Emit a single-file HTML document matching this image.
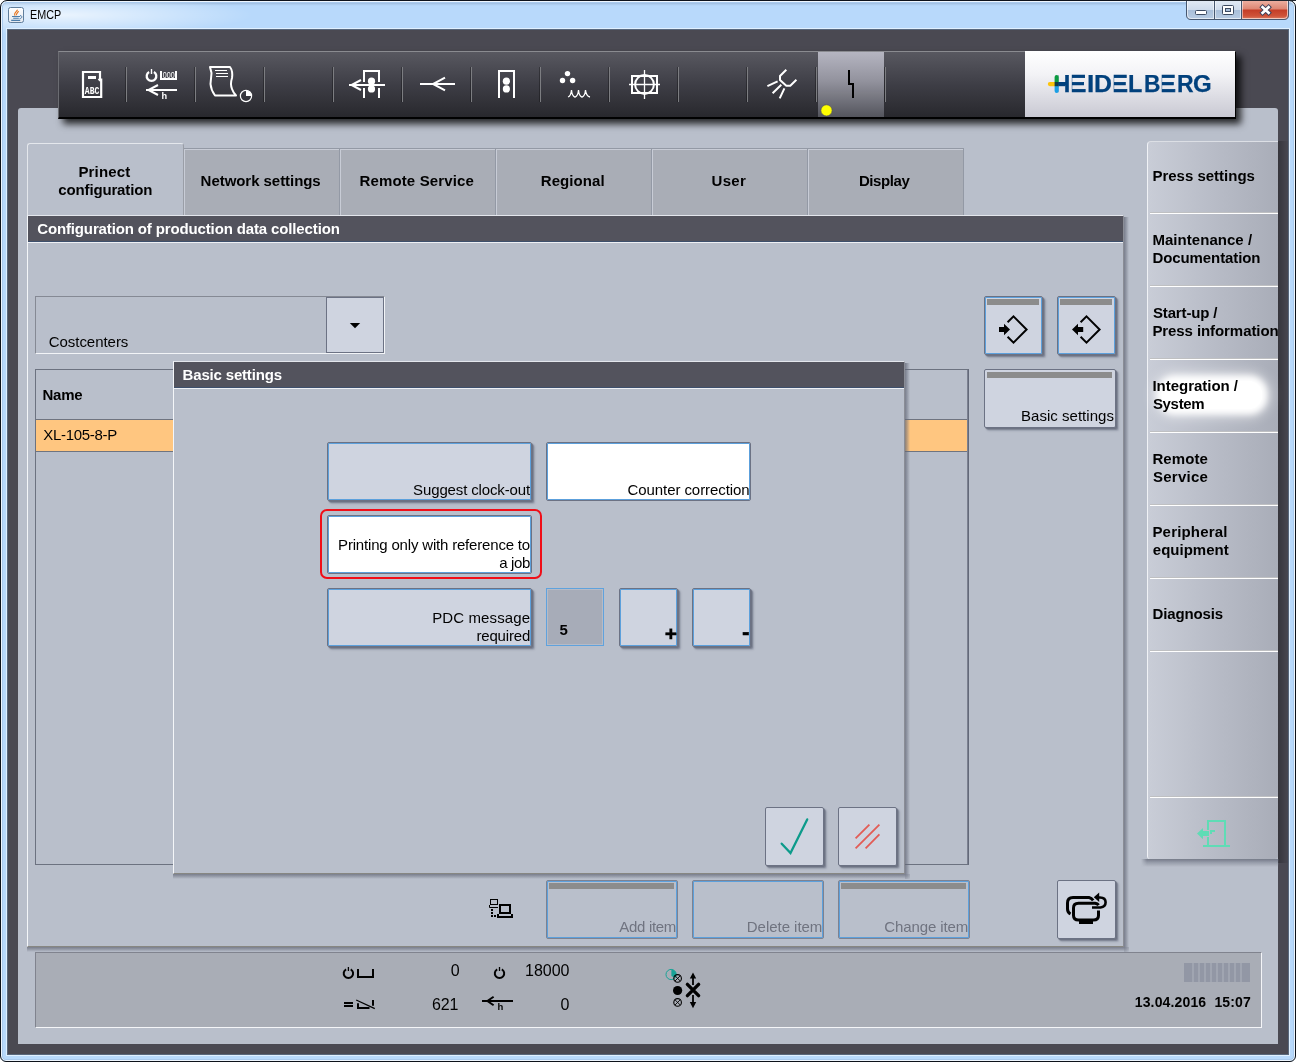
<!DOCTYPE html>
<html><head><meta charset="utf-8"><title>EMCP</title>
<style>
*{box-sizing:border-box;margin:0;padding:0}
html,body{width:1296px;height:1062px;overflow:hidden;background:#fff}
body{font-family:"Liberation Sans",Arial,sans-serif;font-size:14px;color:#000;position:relative}
#root{position:absolute;left:0;top:0;width:1296px;height:1062px;opacity:.999;transform:rotate(0.0001deg)}
.abs{position:absolute}
svg{position:absolute;overflow:visible}
#frame{position:absolute;left:0;top:0;width:1296px;height:1062px;background:radial-gradient(ellipse 190px 20px at 62px 14px,rgba(255,255,255,.7),rgba(255,255,255,.35) 50%,rgba(255,255,255,0)),linear-gradient(180deg,#9fbddd 0,#9fbddd 2px,#a9c8ea 3px,#b2d2f4 4px,#b8d9fb 5px,#b8d9fb 100%);border:1px solid #0c1119;border-radius:7px 7px 6px 6px;box-shadow:inset 0 0 0 1px #eef6fe,inset 0 0 0 2px #a9caee}
#dark{position:absolute;left:7px;top:29px;width:1282px;height:1026px;background:#494851;border:1px solid #58677b;box-shadow:0 0 0 1px #e0f0ff}
#main{position:absolute;left:18px;top:108px;width:1260px;height:936px;background:#b9bfcb;border-radius:3px 3px 0 0}
#toolbar{position:absolute;left:58px;top:51px;width:1178px;height:68px;background:linear-gradient(180deg,#57575f 0,#3d3d45 50%,#27272c 100%);border-top:1px solid #8a8b90;border-left:1px solid #6a6b71;border-right:1px solid #000;border-bottom:2px solid #000;box-shadow:5px 5px 7px rgba(0,0,0,.8)}
.sep{position:absolute;top:15px;width:1px;height:35px;background:#7b7c81;box-shadow:-1px 0 0 rgba(0,0,0,.3)}
#logo{position:absolute;left:1025px;top:51px;width:210px;height:66px;background:linear-gradient(180deg,#fff 0,#f3f3f6 35%,#dcdce3 70%,#c9c9d3 100%)}
#active{position:absolute;left:818px;top:52px;width:66px;height:65px;background:linear-gradient(180deg,#b5b5c1 0,#92929d 45%,#53545c 100%)}
.tab{position:absolute;top:148px;width:156px;height:67px;background:#a9adb6;border-top:1px solid #9399a5;border-right:1px solid #9399a5;box-shadow:inset 1px 1px 0 #c8ccd6}
.tab span{position:absolute;left:0;right:0}
.hdr{background:#52525c;color:#fff;font-weight:bold;font-size:14px;letter-spacing:.33px;white-space:nowrap}
.btn{position:absolute;background:#cfd4e0;border:1px solid #6b7184;border-radius:2px}
.btn .bar{position:absolute;left:2px;right:3px;top:2px;height:6px;background:#8c8c8c}
.lbl{position:absolute;right:1px;bottom:0;font-size:14px;line-height:18px;text-align:right;white-space:nowrap;letter-spacing:.2px}
.side{position:absolute;left:5px;font-weight:bold;font-size:14px;line-height:18px;letter-spacing:.35px;white-space:nowrap}
.sline{position:absolute;left:2px;right:0;height:2px;background:linear-gradient(180deg,#bfc0c2 0,#bfc0c2 50%,#fff 50%,#fff 100%)}
.dis{background:#b9bfcb;box-shadow:none}
.dis .lbl{color:#7f838d}
.st{font-size:16px;line-height:20px;white-space:nowrap;position:absolute;text-align:right}
.gb{border-color:#8d919b}
</style></head><body>
<div id="root"><div id="frame"></div>
<svg style="left:0px;top:0px" width="40" height="30" viewBox="0 0 40 30" ><defs><linearGradient id="jg" x1="0" y1="0" x2="0" y2="1"><stop offset="0" stop-color="#fff"/><stop offset="1" stop-color="#e4e9f0"/></linearGradient></defs><rect x="8.5" y="7.5" width="15" height="15" rx="2" fill="url(#jg)" stroke="#5f7d9c"/><path d="M15.2,15.6 C13.2,13.6 16.2,11.8 17.6,9.8 M16.6,15.2 C15.6,13.6 18.6,12.6 18.4,11" stroke="#e8741c" stroke-width="1.1" fill="none"/><path d="M12,16.5 H20 M13.2,18.3 H18.8 M11.2,20.4 H20.2" stroke="#4c7dab" stroke-width="1.1" fill="none"/><path d="M20,15.6 C22.6,15.4 22.4,18.6 19.6,18.6" stroke="#4c7dab" stroke-width="1" fill="none"/></svg>
<div class="abs" style="left:30px;top:7px;font-size:12px;line-height:16px;color:#000;transform:scaleX(.9);transform-origin:0 0;white-space:nowrap">EMCP</div>
<svg style="left:1176px;top:0px" width="120" height="24" viewBox="1176 0 120 24" ><defs>
<linearGradient id="cb1" x1="0" y1="0" x2="0" y2="1"><stop offset="0" stop-color="#e3ebf5"/><stop offset=".48" stop-color="#cfdcec"/><stop offset=".5" stop-color="#a9bfd9"/><stop offset="1" stop-color="#b9cde4"/></linearGradient>
<linearGradient id="cb2" x1="0" y1="0" x2="0" y2="1"><stop offset="0" stop-color="#eeb3a5"/><stop offset=".45" stop-color="#dd8672"/><stop offset=".5" stop-color="#c43c26"/><stop offset=".8" stop-color="#cf5238"/><stop offset="1" stop-color="#e08a70"/></linearGradient>
<clipPath id="cbc"><path d="M1186.5,0 H1288.5 V15 Q1288.5,19.5 1284,19.5 H1191 Q1186.5,19.5 1186.5,15 Z"/></clipPath>
</defs><g clip-path="url(#cbc)"><rect x="1186" y="0" width="55" height="20" fill="url(#cb1)"/><rect x="1241" y="0" width="48" height="20" fill="url(#cb2)"/></g><path d="M1186.5,0 V15 Q1186.5,19.5 1191,19.5 H1284 Q1288.5,19.5 1288.5,15 V0" fill="none" stroke="#45566e" stroke-width="1"/><path d="M1187.5,1 V15 Q1187.5,18.5 1191,18.5 H1284 Q1287.5,18.5 1287.5,15 V1" fill="none" stroke="rgba(255,255,255,.6)" stroke-width="1"/><path d="M1214.5,1 V19 M1241.5,1 V19" stroke="#45566e" stroke-width="1"/><path d="M1213.5,1 V18 M1215.5,1 V18 M1240.5,1 V18 M1242.5,1 V18" stroke="rgba(255,255,255,.5)" stroke-width="1"/><rect x="1195.5" y="10.5" width="11" height="4" rx="1" fill="#fff" stroke="#3c4a60" stroke-width="1"/><rect x="1222.5" y="5.5" width="11" height="9" rx="1" fill="#fff" stroke="#3c4a60" stroke-width="1"/><rect x="1225.5" y="8.5" width="5" height="3" fill="#a9bfd9" stroke="#3c4a60" stroke-width="1"/><path d="M1262.6,7.2 L1268.6,12.8 M1268.6,7.2 L1262.6,12.8" stroke="#3a3f58" stroke-width="4.6" stroke-linecap="square"/><path d="M1262.6,7.2 L1268.6,12.8 M1268.6,7.2 L1262.6,12.8" stroke="#fff" stroke-width="2.7" stroke-linecap="square"/><rect x="1180" y="0" width="116" height="1" fill="#20262e"/></svg>
<div id="dark"></div>
<div id="main"></div>
<div id="toolbar"><div class="sep" style="left:67px"></div><div class="sep" style="left:136px"></div><div class="sep" style="left:205px"></div><div class="sep" style="left:274px"></div><div class="sep" style="left:343px"></div><div class="sep" style="left:412px"></div><div class="sep" style="left:481px"></div><div class="sep" style="left:550px"></div><div class="sep" style="left:619px"></div><div class="sep" style="left:688px"></div><div class="sep" style="left:757px"></div><div class="sep" style="left:826px"></div></div><div id="active"></div><div id="logo"></div>
<svg style="left:0;top:0;opacity:.999" width="1296" height="130" viewBox="0 0 1296 130" fill="none" stroke="#fff" stroke-width="2">
<path d="M83,72 H100 V79.5 H101.2 V97 H83 Z" stroke-width="2.2"/>
<path d="M98.3,79 L100.6,81.3" stroke-width="1.5"/>
<rect x="88" y="76" width="8" height="3" fill="#fff" stroke="none"/>
<text x="84.8" y="94.2" font-family="Liberation Mono,monospace" font-weight="bold" font-size="8.2" fill="#fff" stroke="none" transform="translate(0,94.2) scale(1,1.34) translate(0,-94.2)" textLength="14.6" lengthAdjust="spacingAndGlyphs">ABC</text>
<path d="M149.1,71.9 A4.8,4.8 0 1 0 153.9,71.9" stroke-width="2.3"/>
<path d="M151.5,69 V74" stroke-width="1.4"/>
<path d="M161,71 V79 H176 V71" stroke-width="2"/>
<text x="162.8" y="77.6" font-family="Liberation Sans,sans-serif" font-size="7.6" fill="#fff" stroke="none" transform="translate(0,77.6) scale(1,1.22) translate(0,-77.6)" textLength="11.8" lengthAdjust="spacingAndGlyphs">000</text>
<path d="M146,90 H177"/>
<path d="M158,85 L148.5,90 L158,95" stroke-width="2"/>
<text x="161.5" y="99" font-family="Liberation Sans,sans-serif" font-weight="bold" font-size="9.2" fill="#fff" stroke="none">h</text>
<path d="M210,67 H230 Q233,71 232,78 Q230,84 232,89 Q233,92 236,95.5 H215 Q211,90 210.5,84 Q211,79 211.5,73 Z" stroke-width="2" stroke-linejoin="round"/>
<path d="M215,70.5 H227 M216,73.5 H228 M216,76.5 H228" stroke-width="1.2"/>
<circle cx="246" cy="96" r="5.6" stroke-width="1.2"/>
<path d="M246,96 V90.4 A5.6,5.6 0 0 1 251.6,96 Z" fill="#fff" stroke="none"/>
<path d="M364,82 V71 H379 V82 M364,88 V98 M379,88 V98" stroke-width="2"/>
<path d="M349,85 H385"/>
<path d="M361,80 L351.5,85 L361,90"/>
<circle cx="371.5" cy="81.2" r="3.6" fill="#fff" stroke="none"/><circle cx="371.5" cy="88.9" r="3.6" fill="#fff" stroke="none"/>
<path d="M420,84 H455"/>
<path d="M445,77.6 L433,84 L445,90.4"/>
<path d="M499,98 V71 H514 V98"/>
<circle cx="506.4" cy="81.2" r="3.6" fill="#fff" stroke="none"/><circle cx="506.4" cy="88.9" r="3.6" fill="#fff" stroke="none"/>
<circle cx="567.5" cy="73.6" r="2.7" fill="#fff" stroke="none"/><circle cx="562.5" cy="80.5" r="2.7" fill="#fff" stroke="none"/><circle cx="572.6" cy="80.5" r="2.7" fill="#fff" stroke="none"/>
<path d="M568,97 Q571,96 571.5,90 Q572,96 575,97.2 Q578,96 578.5,90 Q579,96 582,97.2 Q585,96 585.5,90 Q586,96 590,97" stroke-width="1.3"/>
<rect x="632" y="76" width="25" height="17" stroke-width="2"/>
<circle cx="644.5" cy="84.5" r="9.4" stroke-width="2"/>
<path d="M644.5,70 V99 M629,84.5 H660" stroke-width="1.3"/>
<path d="M786.3,69.7 L780,76 V80 L786.3,85.8 H790.3 L796.4,79.8" stroke-width="2"/>
<path d="M777.6,81.4 L767.4,86.1 M781.3,84.7 L772.6,93.2 M784.4,88.3 L779.7,98.4" stroke-width="2"/>
<path d="M849,70 V84 H853 V98" stroke="#000" stroke-width="2" stroke-linejoin="miter"/>
<circle cx="826.5" cy="110.4" r="5.6" fill="#ffff00" stroke="#4a4a5a" stroke-width=".6"/>
</svg>
<div class="abs" style="left:0;top:69.47px;width:1296px;height:30px;font-weight:bold;font-size:23.75px;line-height:30px;color:#00407c;white-space:nowrap"><span style="position:absolute;left:1053.04px;top:0;transform-origin:0 0;transform:scaleX(1.013);clip-path:inset(0 0 0 4.99px);-webkit-text-stroke:.25px #00407c">H</span><span style="position:absolute;left:1065.30px;top:0;transform-origin:0 0;transform:scaleX(1.350);clip-path:inset(0 0 0 5.04px);-webkit-text-stroke:.7px #00407c">E</span><span style="position:absolute;left:1087.30px;top:0;transform-origin:0 0;transform:scaleX(1.103);-webkit-text-stroke:.25px #00407c">I</span><span style="position:absolute;left:1094.28px;top:0;transform-origin:0 0;transform:scaleX(1.047);-webkit-text-stroke:.25px #00407c">D</span><span style="position:absolute;left:1107.31px;top:0;transform-origin:0 0;transform:scaleX(1.330);clip-path:inset(0 0 0 5.04px);-webkit-text-stroke:.7px #00407c">E</span><span style="position:absolute;left:1128.37px;top:0;transform-origin:0 0;transform:scaleX(0.989);-webkit-text-stroke:.25px #00407c">L</span><span style="position:absolute;left:1143.62px;top:0;transform-origin:0 0;transform:scaleX(0.959);-webkit-text-stroke:.25px #00407c">B</span><span style="position:absolute;left:1155.11px;top:0;transform-origin:0 0;transform:scaleX(1.330);clip-path:inset(0 0 0 5.04px);-webkit-text-stroke:.7px #00407c">E</span><span style="position:absolute;left:1176.61px;top:0;transform-origin:0 0;transform:scaleX(0.968);-webkit-text-stroke:.25px #00407c">R</span><span style="position:absolute;left:1192.84px;top:0;transform-origin:0 0;transform:scaleX(1.011);-webkit-text-stroke:.25px #00407c">G</span></div>
<svg style="left:1020px;top:50px" width="220" height="70" viewBox="1020 50 220 70" ><rect x="1054.6" y="75" width="4.1" height="9" rx="2" fill="#0a9b3f"/><rect x="1054.6" y="84" width="4.1" height="9" rx="2" fill="#1aa0e6"/><rect x="1047.8" y="82" width="9" height="4.2" rx="2.1" fill="#fdc40a"/><rect x="1054.6" y="82" width="4.1" height="4.2" fill="#0f3b46"/><rect x="1058.5" y="82" width="7" height="4.2" fill="#00407c"/></svg>
<div class="abs" style="left:27px;top:143px;width:157px;height:73px;background:#b9bfcb;border:1px solid #e4e7ec;border-right-color:#9a9ea7;border-bottom:none;border-radius:3px 3px 0 0"></div>
<div class="abs" style="left:78.43px;top:162.80px;font-size:15px;line-height:18px;white-space:pre;color:#000;letter-spacing:0.158px;font-weight:bold;">Prinect</div>
<div class="abs" style="left:58.30px;top:180.80px;font-size:15px;line-height:18px;white-space:pre;color:#000;letter-spacing:-0.146px;font-weight:bold;">configuration</div>
<div class="tab" style="left:184px"></div>
<div class="abs" style="left:200.62px;top:171.80px;font-size:15px;line-height:18px;white-space:pre;color:#000;letter-spacing:-0.050px;font-weight:bold;">Network settings</div>
<div class="tab" style="left:340px"></div>
<div class="abs" style="left:359.52px;top:171.80px;font-size:15px;line-height:18px;white-space:pre;color:#000;letter-spacing:0.133px;font-weight:bold;">Remote Service</div>
<div class="tab" style="left:496px"></div>
<div class="abs" style="left:540.73px;top:171.80px;font-size:15px;line-height:18px;white-space:pre;color:#000;letter-spacing:0.093px;font-weight:bold;">Regional</div>
<div class="tab" style="left:652px"></div>
<div class="abs" style="left:711.60px;top:171.80px;font-size:15px;line-height:18px;white-space:pre;color:#000;letter-spacing:0.283px;font-weight:bold;">User</div>
<div class="tab" style="left:808px"></div>
<div class="abs" style="left:858.92px;top:171.80px;font-size:15px;line-height:18px;white-space:pre;color:#000;letter-spacing:-0.396px;font-weight:bold;">Display</div>
<div class="abs" style="left:27px;top:947px;width:1097px;height:5px;background:linear-gradient(180deg,rgba(96,101,116,.72),rgba(96,101,116,.45) 40%,rgba(96,101,116,0))"></div>
<div class="abs" style="left:1124px;top:217px;width:5px;height:730px;background:linear-gradient(90deg,rgba(96,101,116,.72),rgba(96,101,116,.45) 40%,rgba(96,101,116,0))"></div>
<div class="abs" style="left:1124px;top:947px;width:5px;height:5px;background:radial-gradient(circle at 0 0,rgba(96,101,116,.72),rgba(96,101,116,.45) 40%,rgba(96,101,116,0) 100%)"></div>
<div class="abs" id="panel" style="left:27px;top:215px;width:1097px;height:732px;border-left:1px solid #f4f6f9;border-top:1px solid #e3e6ec;border-bottom:1px solid #878782;border-right:1px solid #8a8d96"></div>
<div class="abs hdr" style="left:28px;top:216px;width:1095px;height:25px"></div>
<div class="abs" style="left:37.20px;top:219.80px;font-size:15px;line-height:18px;white-space:pre;color:#fff;letter-spacing:-0.134px;font-weight:bold;">Configuration of production data collection</div>
<div class="abs" style="left:28px;top:241px;width:1095px;height:1px;background:#3d4f6c"></div>
<div class="abs" style="left:28px;top:242px;width:1095px;height:1px;background:#eef0f4"></div>
<div class="abs" style="left:35px;top:296px;width:350px;height:58px;border:1px solid #858994;border-bottom-color:#f2f4f7;border-right-color:#f2f4f7"></div>
<div class="abs" style="left:48.75px;top:332.80px;font-size:15px;line-height:18px;white-space:pre;color:#000;letter-spacing:-0.045px;">Costcenters</div>
<div class="abs" style="left:326px;top:297px;width:58px;height:56px;background:#cfd4e0;border:1px solid #6b7184"></div>
<svg style="left:349px;top:322px" width="12" height="7"><path d="M0.8,1 H11.2 L6,6.3 Z" fill="#000"/></svg>
<div class="abs" style="left:35px;top:369px;width:934px;height:496px;border:1px solid #6b7180;border-right-color:#626878;box-shadow:inset -1px 0 0 #7b8191"></div>
<div class="abs" style="left:42.52px;top:385.80px;font-size:15px;line-height:18px;white-space:pre;color:#000;letter-spacing:-0.258px;font-weight:bold;">Name</div>
<div class="abs" style="left:36px;top:419px;width:931px;height:33px;background:#ffc680;border-top:1px solid #6e7380;border-bottom:1px solid #6e7380"></div>
<div class="abs" style="left:43.23px;top:425.80px;font-size:15px;line-height:18px;white-space:pre;color:#000;letter-spacing:-0.303px;">XL-105-8-P</div>
<div class="btn" style="left:984px;top:296px;width:59px;height:59px;background:#cfd4e0;box-shadow:inset 0 0 0 1px #5ba0dc,1px 1px 0 rgba(95,101,120,.6),2px 2px 1px rgba(95,101,120,.5),3px 3px 2px rgba(95,101,120,.3);"><div class="bar" style="background:#8c8c8c"></div></div>
<div class="btn" style="left:1057px;top:296px;width:59px;height:59px;background:#cfd4e0;box-shadow:inset 0 0 0 1px #5ba0dc,1px 1px 0 rgba(95,101,120,.6),2px 2px 1px rgba(95,101,120,.5),3px 3px 2px rgba(95,101,120,.3);"><div class="bar" style="background:#8c8c8c"></div></div>
<div class="btn" style="left:984px;top:369px;width:132px;height:59px;background:#cfd4e0;box-shadow:1px 1px 0 rgba(95,101,120,.6),2px 2px 1px rgba(95,101,120,.5),3px 3px 2px rgba(95,101,120,.3);"><div class="bar" style="background:#8c8c8c"></div></div>
<div class="abs" style="left:1021.00px;top:406.80px;font-size:15px;line-height:18px;white-space:pre;color:#000;letter-spacing:0.029px;">Basic settings</div>
<svg style="left:980px;top:296px" width="140" height="60" viewBox="980 296 140 60" ><path d="M1007.6,322.2 L1013.5,316.3 L1026.6,329.5 L1013.5,342.7 L1007.6,336.8" fill="none" stroke="#000" stroke-width="2" stroke-linejoin="miter"/><path d="M1080.6,322.2 L1086.5,316.3 L1099.6,329.5 L1086.5,342.7 L1080.6,336.8" fill="none" stroke="#000" stroke-width="2" stroke-linejoin="miter"/><path d="M999,327.1 H1004 V323.8 L1010,329.5 L1004,335.3 V331.9 H999 Z" fill="#000"/><path d="M1083.2,327.1 H1078 V323.8 L1072,329.5 L1078,335.3 V331.9 H1083.2 Z" fill="#000"/></svg>
<div class="btn" style="left:546px;top:880px;width:132px;height:59px;background:#b9bfcb;box-shadow:inset 0 0 0 1px #5ba0dc;border-color:#7d8291;"><div class="bar" style="background:#8c8c8c"></div></div>
<div class="btn" style="left:692px;top:880px;width:132px;height:59px;background:#b9bfcb;box-shadow:inset 0 0 0 1px #5ba0dc;border-color:#7d8291;"></div>
<div class="btn" style="left:838px;top:880px;width:132px;height:59px;background:#b9bfcb;box-shadow:inset 0 0 0 1px #5ba0dc;border-color:#7d8291;"><div class="bar" style="background:#8c8c8c"></div></div>
<div class="abs" style="left:619.30px;top:917.80px;font-size:15px;line-height:18px;white-space:pre;color:#6f7380;letter-spacing:-0.311px;">Add item</div>
<div class="abs" style="left:746.80px;top:917.80px;font-size:15px;line-height:18px;white-space:pre;color:#6f7380;letter-spacing:-0.033px;">Delete item</div>
<div class="abs" style="left:884.25px;top:917.80px;font-size:15px;line-height:18px;white-space:pre;color:#6f7380;letter-spacing:-0.093px;">Change item</div>
<div class="btn" style="left:1057px;top:880px;width:59px;height:59px;background:#cfd4e0;box-shadow:1px 1px 0 rgba(95,101,120,.6),2px 2px 1px rgba(95,101,120,.5),3px 3px 2px rgba(95,101,120,.3);"></div>
<svg style="left:1057px;top:880px" width="60" height="60" viewBox="1057 880 60 60" ><g fill="none" stroke="#000" stroke-width="3"><path d="M1070.5,914 Q1067.5,912.5 1067.5,909 V903 Q1067.5,897.5 1073,897.5 H1089 Q1091.5,898 1093.2,900.3"/><path d="M1098.5,910.5 V915.5 Q1098.5,920 1093.5,920 H1078.5 Q1073.5,920 1073.5,915.5 V908 Q1073.5,903.3 1078.5,903.3 H1095 Q1097.5,903.6 1098.6,905.2"/><path d="M1092,907.5 H1100.5 Q1105.6,906.8 1105.6,902.3 Q1105.6,897.6 1100,897.5 H1098" stroke-width="2.6"/></g><path d="M1093.8,897.3 L1099.2,892.6 V902 Z" fill="#000"/><rect x="1079" y="920" width="14" height="4" fill="#000"/></svg>
<svg style="left:486px;top:896px" width="30" height="24" viewBox="486 896 30 24" ><g fill="none" stroke="#000"><rect x="490.5" y="899.5" width="7" height="5" stroke-width="1"/><path d="M489.5,905 V907.5 H498" stroke-width="1"/><rect x="500" y="905" width="10" height="8" stroke-width="2"/><path d="M498,914 V917 H512 V914" stroke-width="2"/></g><g fill="#000"><rect x="491" y="909" width="2" height="2"/><rect x="491" y="912" width="2" height="2"/><rect x="491" y="915" width="2" height="2"/><rect x="494" y="915" width="2" height="2"/></g></svg>
<div class="abs" style="left:1141px;top:859px;width:138px;height:8px;background:linear-gradient(180deg,rgba(100,105,120,.8),rgba(100,105,120,.35) 50%,rgba(100,105,120,0));-webkit-mask-image:linear-gradient(90deg,transparent,#000 6px)"></div>
<div class="abs" style="left:1278px;top:141px;width:11px;height:722px;background:linear-gradient(90deg,rgba(0,0,0,.28),rgba(0,0,0,0))"></div>
<div class="abs" id="side" style="left:1147px;top:141px;width:131px;height:718px;background:linear-gradient(90deg,#c9cdd7 0,#b8bcc7 50%,#a9adb8 100%);border-radius:4px 0 3px 3px;border-top:1px solid #dcdfe5;border-left:1px solid #f0f2f6">
<div class="abs" style="left:14px;top:239px;width:100px;height:28px;background:#fff;border-radius:13px;box-shadow:0 0 6px 5px #fff,0 0 12px 9px rgba(255,255,255,.5)"></div>
<div class="sline" style="top:70px"></div>
<div class="sline" style="top:143px"></div>
<div class="sline" style="top:216px"></div>
<div class="sline" style="top:289px"></div>
<div class="sline" style="top:362px"></div>
<div class="sline" style="top:435px"></div>
<div class="sline" style="top:508px"></div>
<div class="sline" style="top:654px"></div>
</div>
<div class="abs" style="left:1152.43px;top:166.80px;font-size:15px;line-height:18px;white-space:pre;color:#000;letter-spacing:-0.004px;font-weight:bold;">Press settings</div>
<div class="abs" style="left:1152.43px;top:230.80px;font-size:15px;line-height:18px;white-space:pre;color:#000;letter-spacing:0.042px;font-weight:bold;">Maintenance /</div>
<div class="abs" style="left:1152.43px;top:248.80px;font-size:15px;line-height:18px;white-space:pre;color:#000;letter-spacing:-0.088px;font-weight:bold;">Documentation</div>
<div class="abs" style="left:1152.95px;top:303.80px;font-size:15px;line-height:18px;white-space:pre;color:#000;letter-spacing:-0.139px;font-weight:bold;">Start-up /</div>
<div class="abs" style="left:1152.43px;top:321.80px;font-size:15px;line-height:18px;white-space:pre;color:#000;letter-spacing:-0.083px;font-weight:bold;">Press information</div>
<div class="abs" style="left:1152.43px;top:376.80px;font-size:15px;line-height:18px;white-space:pre;color:#000;letter-spacing:-0.021px;font-weight:bold;">Integration /</div>
<div class="abs" style="left:1152.95px;top:394.80px;font-size:15px;line-height:18px;white-space:pre;color:#000;letter-spacing:-0.330px;font-weight:bold;">System</div>
<div class="abs" style="left:1152.43px;top:449.80px;font-size:15px;line-height:18px;white-space:pre;color:#000;letter-spacing:0.105px;font-weight:bold;">Remote</div>
<div class="abs" style="left:1152.95px;top:467.80px;font-size:15px;line-height:18px;white-space:pre;color:#000;letter-spacing:0.263px;font-weight:bold;">Service</div>
<div class="abs" style="left:1152.43px;top:522.80px;font-size:15px;line-height:18px;white-space:pre;color:#000;letter-spacing:0.178px;font-weight:bold;">Peripheral</div>
<div class="abs" style="left:1152.80px;top:540.80px;font-size:15px;line-height:18px;white-space:pre;color:#000;letter-spacing:0.003px;font-weight:bold;">equipment</div>
<div class="abs" style="left:1152.43px;top:604.80px;font-size:15px;line-height:18px;white-space:pre;color:#000;letter-spacing:-0.128px;font-weight:bold;">Diagnosis</div>
<svg style="left:1194px;top:816px" width="40" height="34" viewBox="1194 816 40 34" ><g fill="#5edcb5"><rect x="1207" y="820" width="19" height="2"/><rect x="1207" y="820" width="2" height="10"/><rect x="1207" y="837" width="2" height="9"/><rect x="1224" y="820" width="2" height="26"/><rect x="1203" y="845" width="27" height="2"/><path d="M1197,833.5 L1203,828 V831 H1209 V836 H1203 V839.2 Z"/><rect x="1210" y="830" width="5" height="2"/><rect x="1210" y="830" width="2" height="4"/></g></svg>
<div class="abs" style="left:35px;top:952px;width:1227px;height:76px;background:#a9adb6;border:1px solid #7f838e;border-bottom-color:#f4f5f8;border-right-color:#f4f5f8"></div>
<div class="abs" style="left:450.78px;top:962.46px;font-size:16px;line-height:18px;white-space:pre;color:#000;letter-spacing:0.000px;">0</div>
<div class="abs" style="left:432.10px;top:996.46px;font-size:16px;line-height:18px;white-space:pre;color:#000;letter-spacing:-0.160px;">621</div>
<div class="abs" style="left:525.10px;top:962.46px;font-size:16px;line-height:18px;white-space:pre;color:#000;letter-spacing:-0.030px;">18000</div>
<div class="abs" style="left:560.58px;top:996.46px;font-size:16px;line-height:18px;white-space:pre;color:#000;letter-spacing:0.000px;">0</div>
<div class="abs" style="left:1134.76px;top:993.15px;font-size:14px;line-height:18px;white-space:pre;color:#000;letter-spacing:0.149px;font-weight:bold;">13.04.2016  15:07</div>
<div class="abs" style="left:1184px;top:963px;width:66px;height:19px;background:#a0a5b1"></div>
<div class="abs" style="left:1188px;top:963px;width:58px;height:19px;background:repeating-linear-gradient(90deg,#9297a5 0,#9297a5 4px,transparent 4px,transparent 6px)"></div>
<div class="abs" style="left:1184px;top:963px;width:4px;height:19px;background:#9297a5"></div><div class="abs" style="left:1246px;top:963px;width:4px;height:19px;background:#9297a5"></div>
<svg style="left:336px;top:960px" width="380" height="56" viewBox="336 960 380 56" ><path d="M346.09999999999997,969.3 A4.7,4.7 0 1 0 350.7,969.3" fill="none" stroke="#000" stroke-width="2"/><path d="M348.4,967.0 V971.0" stroke="#000" stroke-width="1.3"/><path d="M358,969 V977 H373 V969" fill="none" stroke="#000" stroke-width="2"/><rect x="344" y="1002" width="9" height="2" fill="#000"/><rect x="344" y="1005" width="9" height="2" fill="#000"/><path d="M358,1003.2 V1008 H369.5 M373,1000 V1005.7" fill="none" stroke="#000" stroke-width="2"/><path d="M356.2,1000 L374.8,1008.6" stroke="#000" stroke-width="1.2"/><path d="M497.2,969.3 A4.7,4.7 0 1 0 501.8,969.3" fill="none" stroke="#000" stroke-width="2"/><path d="M499.5,967.0 V971.0" stroke="#000" stroke-width="1.3"/><path d="M482,1001 H513" stroke="#000" stroke-width="2"/><path d="M493.6,996.7 L487.4,1001 L493.6,1005.3" fill="none" stroke="#000" stroke-width="2"/><text x="497.6" y="1009.7" font-family="Liberation Sans,Arial,sans-serif" font-weight="bold" font-size="9.5" fill="#000">h</text><circle cx="671.1" cy="974.5" r="5.1" fill="none" stroke="#17a397" stroke-width="1"/><path d="M671.4,969.4 A5.1,5.1 0 0 1 674.8,978 L671.4,976 Z" fill="#17a397"/><circle cx="677.6" cy="978.4" r="3.8" fill="none" stroke="#000" stroke-width="1.1"/><path d="M675,975.8 L680.2,981.0 M680.2,975.8 L675,981.0" stroke="#000" stroke-width=".9"/><circle cx="677.6" cy="1002.4" r="3.8" fill="none" stroke="#000" stroke-width="1.1"/><path d="M675,999.8 L680.2,1005.0 M680.2,999.8 L675,1005.0" stroke="#000" stroke-width=".9"/><circle cx="677.6" cy="990.5" r="4.6" fill="#000"/><path d="M687.4,984.4 L698.6,995.6 M698.6,984.4 L687.4,995.6" stroke="#000" stroke-width="3.4" stroke-linecap="round"/><path d="M693,976 V985 M693,995 V1004" stroke="#000" stroke-width="1.8"/><path d="M693,972.6 L696.2,978.6 H689.8 Z M693,1008.2 L696.2,1002 H689.8 Z" fill="#000"/></svg>
<div class="abs" style="left:173px;top:874px;width:732px;height:5px;background:linear-gradient(180deg,rgba(96,101,116,.72),rgba(96,101,116,.45) 40%,rgba(96,101,116,0))"></div>
<div class="abs" style="left:905px;top:363px;width:5px;height:511px;background:linear-gradient(90deg,rgba(96,101,116,.72),rgba(96,101,116,.45) 40%,rgba(96,101,116,0))"></div>
<div class="abs" style="left:905px;top:874px;width:5px;height:5px;background:radial-gradient(circle at 0 0,rgba(96,101,116,.72),rgba(96,101,116,.45) 40%,rgba(96,101,116,0) 100%)"></div>
<div class="abs" id="dlg" style="left:173px;top:361px;width:732px;height:513px;background:#b9bfcb;border-left:1px solid #f4f6f9;border-top:1px solid #e3e6ec;border-right:1px solid #8a8d96;border-bottom:1px solid #878782"></div>
<div class="abs hdr" style="left:174px;top:362px;width:730px;height:25px"></div>
<div class="abs" style="left:182.62px;top:365.80px;font-size:15px;line-height:18px;white-space:pre;color:#fff;letter-spacing:-0.179px;font-weight:bold;">Basic settings</div>
<div class="abs" style="left:174px;top:387px;width:730px;height:1px;background:#3d4f6c"></div>
<div class="abs" style="left:174px;top:388px;width:730px;height:1px;background:#eef0f4"></div>
<div class="btn" style="left:327px;top:442px;width:205px;height:59px;background:#cfd4e0;box-shadow:inset 0 0 0 1px #5ba0dc,1px 1px 0 rgba(95,101,120,.6),2px 2px 1px rgba(95,101,120,.5),3px 3px 2px rgba(95,101,120,.3);"></div>
<div class="abs" style="left:413.12px;top:480.80px;font-size:15px;line-height:18px;white-space:pre;color:#000;letter-spacing:-0.139px;">Suggest clock-out</div>
<div class="btn" style="left:546px;top:442px;width:205px;height:59px;background:#fff;box-shadow:inset 0 0 0 1px #5ba0dc;"></div>
<div class="abs" style="left:627.55px;top:480.80px;font-size:15px;line-height:18px;white-space:pre;color:#000;letter-spacing:-0.079px;">Counter correction</div>
<div class="abs" style="left:320px;top:509px;width:222px;height:70px;border:2px solid #f00d17;border-radius:7px"></div>
<div class="btn" style="left:327px;top:515px;width:205px;height:59px;background:#fff;box-shadow:inset 0 0 0 1px #5ba0dc;"></div>
<div class="abs" style="left:338.10px;top:535.80px;font-size:15px;line-height:18px;white-space:pre;color:#000;letter-spacing:-0.184px;">Printing only with reference to</div>
<div class="abs" style="left:499.30px;top:553.80px;font-size:15px;line-height:18px;white-space:pre;color:#000;letter-spacing:-0.394px;">a job</div>
<div class="btn" style="left:327px;top:588px;width:205px;height:59px;background:#cfd4e0;box-shadow:inset 0 0 0 1px #5ba0dc,1px 1px 0 rgba(95,101,120,.6),2px 2px 1px rgba(95,101,120,.5),3px 3px 2px rgba(95,101,120,.3);"></div>
<div class="abs" style="left:432.20px;top:608.80px;font-size:15px;line-height:18px;white-space:pre;color:#000;letter-spacing:0.120px;">PDC message</div>
<div class="abs" style="left:476.42px;top:626.80px;font-size:15px;line-height:18px;white-space:pre;color:#000;letter-spacing:-0.157px;">required</div>
<div class="abs" style="left:546px;top:588px;width:58px;height:58px;background:#a7acb8;border:1px solid #5ea2dd;box-shadow:inset 0 0 0 1px #b6bbc7"></div>
<div class="abs" style="left:559.45px;top:620.80px;font-size:15px;line-height:18px;white-space:pre;color:#000;letter-spacing:0.000px;font-weight:bold;">5</div>
<div class="btn" style="left:619px;top:588px;width:59px;height:59px;background:#cfd4e0;box-shadow:inset 0 0 0 1px #5ba0dc,1px 1px 0 rgba(95,101,120,.6),2px 2px 1px rgba(95,101,120,.5),3px 3px 2px rgba(95,101,120,.3);"></div>
<div class="btn" style="left:692px;top:588px;width:59px;height:59px;background:#cfd4e0;box-shadow:inset 0 0 0 1px #5ba0dc,1px 1px 0 rgba(95,101,120,.6),2px 2px 1px rgba(95,101,120,.5),3px 3px 2px rgba(95,101,120,.3);"></div>
<div class="abs" style="left:664.65px;top:620.92px;font-size:21px;line-height:26px;white-space:pre;color:#000;letter-spacing:0.000px;font-weight:bold;-webkit-text-stroke:.4px #000;">+</div>
<div class="abs" style="left:742.12px;top:619.33px;font-size:23px;line-height:26px;white-space:pre;color:#000;letter-spacing:0.000px;font-weight:bold;-webkit-text-stroke:.3px #000;">-</div>
<div class="btn" style="left:765px;top:807px;width:59px;height:59px;background:#cfd4e0;box-shadow:1px 1px 0 rgba(95,101,120,.6),2px 2px 1px rgba(95,101,120,.5),3px 3px 2px rgba(95,101,120,.3);"></div>
<div class="btn" style="left:838px;top:807px;width:59px;height:59px;background:#cfd4e0;box-shadow:1px 1px 0 rgba(95,101,120,.6),2px 2px 1px rgba(95,101,120,.5),3px 3px 2px rgba(95,101,120,.3);"></div>
<svg style="left:762px;top:806px" width="140" height="62" viewBox="762 806 140 62" ><path d="M781.7,843.7 L790.5,853.1 L807.2,819.4" fill="none" stroke="#0c9b8b" stroke-width="2.3" stroke-linecap="round" stroke-linejoin="miter"/><path d="M855.6,838.3 L869.4,824.7 M855.6,848.3 L879.4,824.7 M865.6,848.3 L879.4,834.4" fill="none" stroke="#e25b55" stroke-width="1.8"/></svg>
</div></body></html>
